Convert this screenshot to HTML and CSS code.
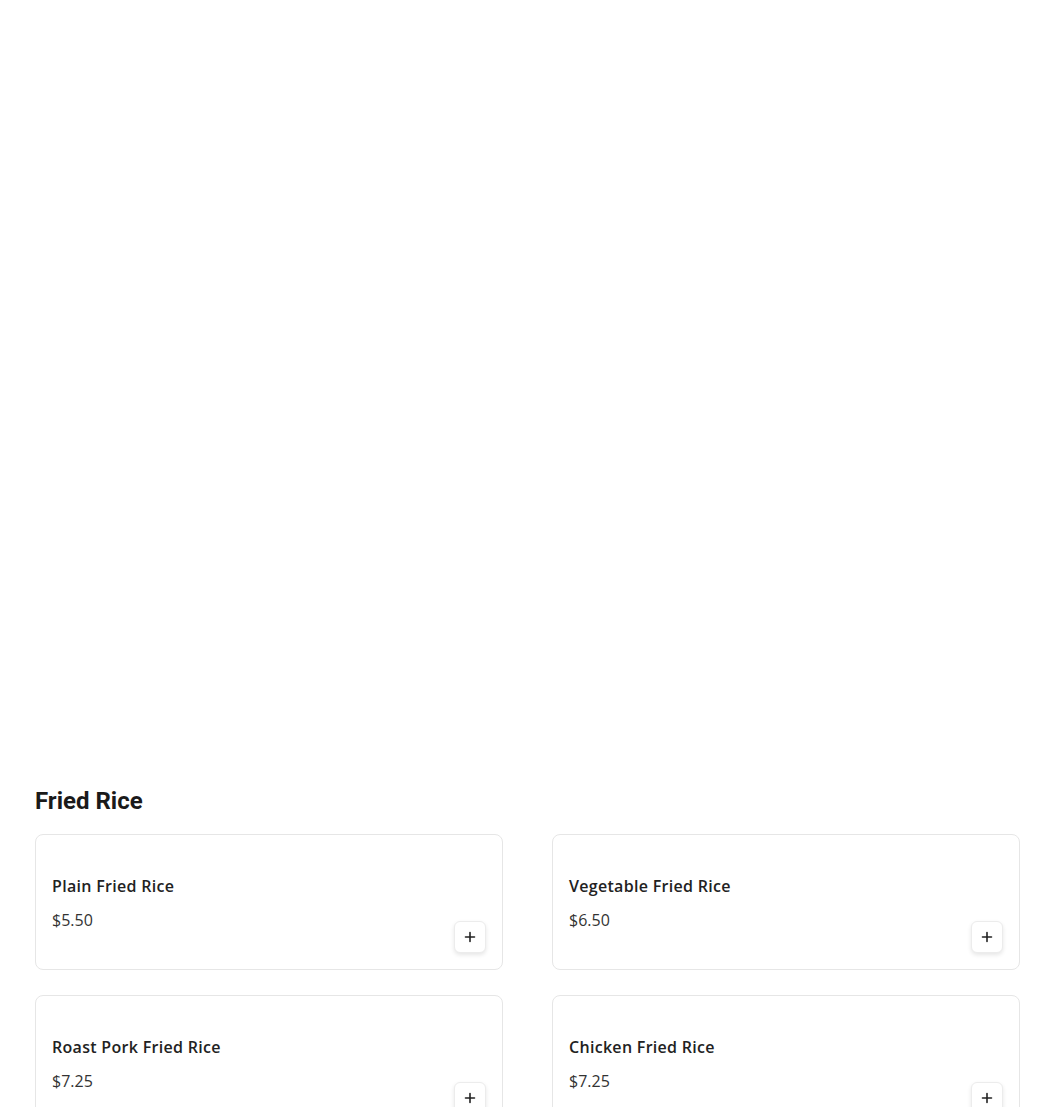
FILE: index.html
```html
<!DOCTYPE html>
<html lang="en">
<head>
    <meta charset="UTF-8">
    <meta name="viewport" content="width=device-width, initial-scale=1.0">
    <title>Menu - Fried Rice</title>
    <link rel="stylesheet" href="styles.css">
</head>
<body>
    <div class="hero"></div>

    <section class="category">
        <h2>Fried Rice</h2>

        <div class="items">
            <div class="item">
                <div class="item-info">
                    <div class="item-name">Plain Fried Rice</div>
                    <div class="item-price">$5.50</div>
                </div>
                <button class="add-btn" aria-label="Add Plain Fried Rice">
                    <svg width="12" height="12" viewBox="0 0 12 12"><path d="M6 1.5v9M1.5 6h9" stroke="#222" stroke-width="1.6" stroke-linecap="round"/></svg>
                </button>
            </div>
            <div class="item">
                <div class="item-info">
                    <div class="item-name">Vegetable Fried Rice</div>
                    <div class="item-price">$6.50</div>
                </div>
                <button class="add-btn" aria-label="Add Vegetable Fried Rice">
                    <svg width="12" height="12" viewBox="0 0 12 12"><path d="M6 1.5v9M1.5 6h9" stroke="#222" stroke-width="1.6" stroke-linecap="round"/></svg>
                </button>
            </div>
            <div class="item">
                <div class="item-info">
                    <div class="item-name">Roast Pork Fried Rice</div>
                    <div class="item-price">$7.25</div>
                </div>
                <button class="add-btn" aria-label="Add Roast Pork Fried Rice">
                    <svg width="12" height="12" viewBox="0 0 12 12"><path d="M6 1.5v9M1.5 6h9" stroke="#222" stroke-width="1.6" stroke-linecap="round"/></svg>
                </button>
            </div>
            <div class="item">
                <div class="item-info">
                    <div class="item-name">Chicken Fried Rice</div>
                    <div class="item-price">$7.25</div>
                </div>
                <button class="add-btn" aria-label="Add Chicken Fried Rice">
                    <svg width="12" height="12" viewBox="0 0 12 12"><path d="M6 1.5v9M1.5 6h9" stroke="#222" stroke-width="1.6" stroke-linecap="round"/></svg>
                </button>
            </div>
        </div>
    </section>
</body>
</html>
```

FILE: styles.css
```css
body {
    margin: 0;
    background-color: #fff;
    font-family: "Open Sans", sans-serif;
    color: #1a1a1a;
}

.hero {
    height: 785px;
}

.category {
    padding: 0 30px 0 35px;
}

.category h2 {
    font-family: Roboto, sans-serif;
    font-size: 24px;
    font-weight: 700;
    line-height: 32px;
    margin: 0 0 17px;
    color: #1a1a1a;
}

.items {
    display: grid;
    grid-template-columns: 1fr 1fr;
    column-gap: 49px;
    row-gap: 25px;
}

.item {
    display: flex;
    justify-content: space-between;
    align-items: flex-end;
    min-height: 136px;
    box-sizing: border-box;
    padding: 16px;
    border: 1px solid #e6e6e6;
    border-radius: 8px;
    background-color: #fff;
}

.item-info {
    align-self: flex-start;
    padding-top: 23px;
}

.item-name {
    font-size: 16px;
    font-weight: 600;
    letter-spacing: 0.3px;
    line-height: 24px;
    color: #222;
}

.item-price {
    margin-top: 10px;
    font-size: 16px;
    line-height: 24px;
    color: #333;
}

.add-btn {
    width: 32px;
    height: 32px;
    padding: 0;
    display: flex;
    align-items: center;
    justify-content: center;
    background-color: #fff;
    border: 1px solid #ececec;
    border-radius: 6px;
    box-shadow: 0 2px 4px rgba(0,0,0,0.1);
    cursor: pointer;
}
```
